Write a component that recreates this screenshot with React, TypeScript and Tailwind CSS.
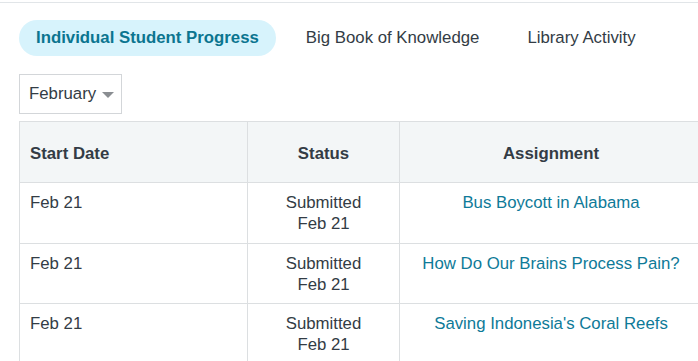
import React from "react";

const rows = [
  { date: "Feb 21", status: "Submitted", sdate: "Feb 21", title: "Bus Boycott in Alabama" },
  { date: "Feb 21", status: "Submitted", sdate: "Feb 21", title: "How Do Our Brains Process Pain?" },
  { date: "Feb 21", status: "Submitted", sdate: "Feb 21", title: "Saving Indonesia's Coral Reefs" },
];

export default function App() {
  return (
    <div
      className="w-[698px] h-[361px] overflow-hidden bg-white text-[#333c45]"
      style={{ fontFamily: '"Liberation Sans", Arial, sans-serif' }}
    >
      <div className="h-[3px] border-b border-[#e1e5e8]" />
      <div className="flex items-center mt-[17px] ml-[19px] text-[16.8px] leading-[20px]">
        <div className="h-[36px] px-[17px] flex items-center rounded-full bg-[#d7f3fc] text-[#0b7590] font-bold">
          Individual Student Progress
        </div>
        <div className="ml-[13px] px-[17px] h-[36px] flex items-center">Big Book of Knowledge</div>
        <div className="ml-[14px] px-[17px] h-[36px] flex items-center">Library Activity</div>
      </div>
      <div className="mt-[18px] ml-[19px] w-[103px] h-[40px] border border-[#d3d6d9] flex items-center pl-[9px] text-[16.8px]">
        <span>February</span>
        <svg width="12" height="6" viewBox="0 0 12 6" className="ml-[6px] mt-[2px]">
          <polygon points="0,0 12,0 6,6" fill="#8a8e92" />
        </svg>
      </div>
      <table className="mt-[7px] ml-[19px] w-[683px] border-collapse text-[16.8px] leading-[21px] table-fixed">
        <colgroup>
          <col className="w-[228px]" />
          <col className="w-[152px]" />
          <col className="w-[303px]" />
        </colgroup>
        <thead>
          <tr className="bg-[#f3f6f7] h-[61px]">
            <th className="border border-[#dcdfe1] text-left font-bold px-[10px] pt-[2px]">Start Date</th>
            <th className="border border-[#dcdfe1] text-center font-bold pt-[2px]">Status</th>
            <th className="border border-[#dcdfe1] text-center font-bold pt-[2px]">Assignment</th>
          </tr>
        </thead>
        <tbody>
          {rows.map((r, i) => (
            <tr key={i} className="h-[60.5px]">
              <td className="border border-[#dcdfe1] align-top px-[10px] pt-[9px]">{r.date}</td>
              <td className="border border-[#dcdfe1] align-top text-center pt-[9px]">
                <div>{r.status}</div>
                <div>{r.sdate}</div>
              </td>
              <td className="border border-[#dcdfe1] align-top text-center pt-[9px] text-[#0e7a98]">
                {r.title}
              </td>
            </tr>
          ))}
        </tbody>
      </table>
    </div>
  );
}
